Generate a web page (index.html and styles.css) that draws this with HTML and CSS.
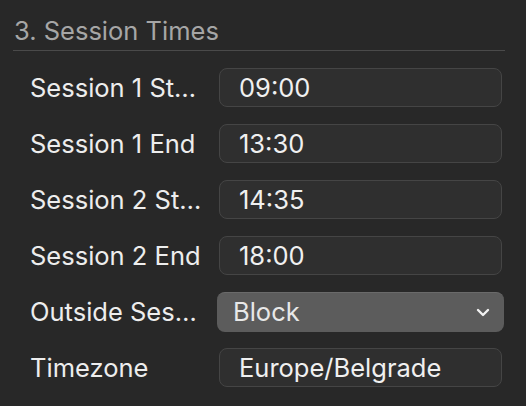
FILE: index.html
```html
<!DOCTYPE html>
<html>
<head>
<meta charset="utf-8">
<link rel="stylesheet" href="styles.css">
</head>
<body>
<div class="panel">
  <h2 class="section-title">3. Session Times</h2>
  <div class="form">
    <div class="row"><span class="label">Session 1 St…</span><div class="field">09:00</div></div>
    <div class="row"><span class="label">Session 1 End</span><div class="field">13:30</div></div>
    <div class="row"><span class="label">Session 2 St…</span><div class="field">14:35</div></div>
    <div class="row"><span class="label">Session 2 End</span><div class="field">18:00</div></div>
    <div class="row"><span class="label">Outside Ses…</span>
      <div class="select"><span class="select-value">Block</span>
        <svg class="chevron" width="14" height="9" viewBox="0 0 14 9"><path d="M2 2 L7 7 L12 2" fill="none" stroke="#f2f2f2" stroke-width="2.4" stroke-linecap="round" stroke-linejoin="round"/></svg>
      </div>
    </div>
    <div class="row"><span class="label">Timezone</span><div class="field">Europe/Belgrade</div></div>
  </div>
</div>
</body>
</html>
```
FILE: styles.css
```css
html, body {
  margin: 0;
  padding: 0;
  background: #282828;
}
body {
  width: 526px;
  height: 406px;
  overflow: hidden;
  font-family: Inter, "Liberation Sans", sans-serif;
  font-size: 25.5px;
  color: #ededed;
}
.panel {
  padding: 15px 21px 0 13px;
}
.section-title {
  margin: 0;
  font-size: 25.5px;
  font-weight: normal;
  line-height: 30px;
  color: #a6a6a6;
  padding: 1px 0 4px 1px;
  border-bottom: 1px solid #4a4a4a;
}
.form {
  display: flex;
  flex-direction: column;
  gap: 17px;
  padding: 17px 3px 0 17px;
}
.row {
  display: grid;
  grid-template-columns: 189px 1fr;
  align-items: center;
  height: 39px;
}
.label {
  white-space: nowrap;
  line-height: 30px;
}
.field {
  box-sizing: border-box;
  height: 39px;
  border: 1px solid #454545;
  border-radius: 8px;
  background: #2f2f2f;
  padding-left: 19px;
  line-height: 37px;
  color: #f0f0f0;
}
.select {
  box-sizing: border-box;
  height: 40px;
  margin: 0 -2px;
  border-radius: 8px;
  background: #5c5c5c;
  border-top: 1px solid #6a6a6a;
  padding: 0 14px 2px 16px;
  display: flex;
  align-items: center;
  justify-content: space-between;
  color: #e8e8e8;
}
.select-value {
  line-height: 30px;
}
.chevron {
  display: block;
  margin-top: 2px;
}
```
